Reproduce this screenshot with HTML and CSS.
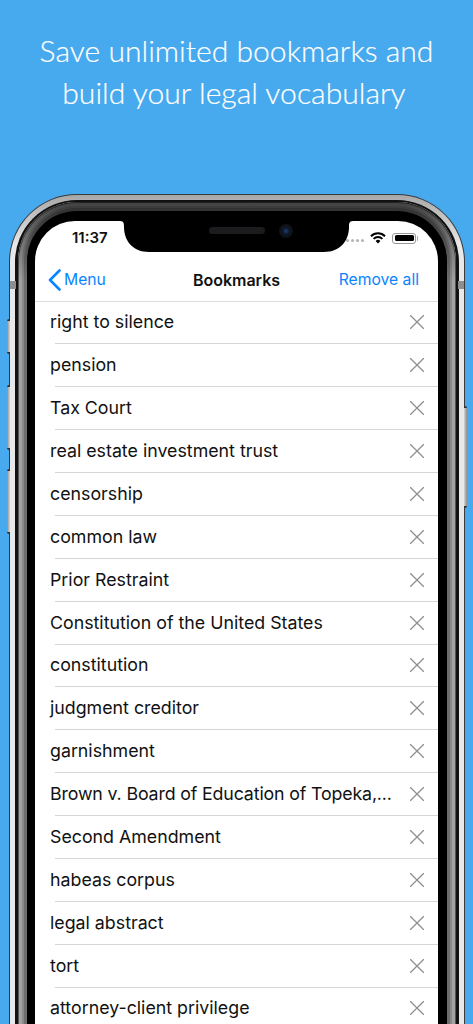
FILE: index.html
```html
<!DOCTYPE html>
<html lang="en">
<head>
<meta charset="utf-8">
<title>Bookmarks</title>
<link rel="stylesheet" href="styles.css">
</head>
<body>
<main class="page">
  <h1 class="headline">Save unlimited bookmarks and<br><span class="line-two">build your legal vocabulary</span></h1>
  <div class="phone">
    <span class="btn btn-mute"></span>
    <span class="btn btn-up"></span>
    <span class="btn btn-down"></span>
    <span class="btn btn-power"></span>
    <div class="bezel-light">
      <div class="bezel-black">
        <div class="bezel-grey">
          <div class="bezel-inner">
            <div class="screen">
              <svg class="notch" width="233" height="31" viewBox="0 0 233 31"><path d="M0 0H233C229 0 229 3 229 6C229 20 220 31 204 31H29C13 31 4 20 4 6C4 3 4 0 0 0Z" fill="#000"/></svg>
              <span class="speaker"></span>
              <span class="camera"></span>
              <div class="status">
                <span class="time">11:37</span>
                <div class="status-icons">
                  <span class="signal"><i></i><i></i><i></i><i></i></span>
                  <svg class="wifi" width="16" height="12" viewBox="0 0 16 12"><path d="M8 11.6 5.6 9a3.4 3.4 0 0 1 4.8 0Z" fill="#000"/><path d="M3.6 6.9a6.3 6.3 0 0 1 8.8 0M1 4.2a10 10 0 0 1 14 0" fill="none" stroke="#000" stroke-width="2"/></svg>
                  <span class="battery"><i></i></span>
                </div>
              </div>
              <nav class="nav">
                <a class="back"><svg width="13" height="22" viewBox="0 0 13 22"><path d="M11.5 1.5 2 11l9.500 9.500" fill="none" stroke="#0a84ff" stroke-width="2.600" stroke-linecap="round" stroke-linejoin="round"/></svg>Menu</a>
                <span class="title">Bookmarks</span>
                <a class="remove">Remove all</a>
              </nav>
              <ul class="list">
                <li class="row"><span class="term">right to silence</span><svg class="x" viewBox="0 0 14 14"><path d="M0 0 14 14M14 0 0 14"/></svg></li>
                <li class="row"><span class="term">pension</span><svg class="x" viewBox="0 0 14 14"><path d="M0 0 14 14M14 0 0 14"/></svg></li>
                <li class="row"><span class="term">Tax Court</span><svg class="x" viewBox="0 0 14 14"><path d="M0 0 14 14M14 0 0 14"/></svg></li>
                <li class="row"><span class="term">real estate investment trust</span><svg class="x" viewBox="0 0 14 14"><path d="M0 0 14 14M14 0 0 14"/></svg></li>
                <li class="row"><span class="term">censorship</span><svg class="x" viewBox="0 0 14 14"><path d="M0 0 14 14M14 0 0 14"/></svg></li>
                <li class="row"><span class="term">common law</span><svg class="x" viewBox="0 0 14 14"><path d="M0 0 14 14M14 0 0 14"/></svg></li>
                <li class="row"><span class="term">Prior Restraint</span><svg class="x" viewBox="0 0 14 14"><path d="M0 0 14 14M14 0 0 14"/></svg></li>
                <li class="row"><span class="term">Constitution of the United States</span><svg class="x" viewBox="0 0 14 14"><path d="M0 0 14 14M14 0 0 14"/></svg></li>
                <li class="row"><span class="term">constitution</span><svg class="x" viewBox="0 0 14 14"><path d="M0 0 14 14M14 0 0 14"/></svg></li>
                <li class="row"><span class="term">judgment creditor</span><svg class="x" viewBox="0 0 14 14"><path d="M0 0 14 14M14 0 0 14"/></svg></li>
                <li class="row"><span class="term">garnishment</span><svg class="x" viewBox="0 0 14 14"><path d="M0 0 14 14M14 0 0 14"/></svg></li>
                <li class="row"><span class="term term-tight">Brown v. Board of Education of Topeka,...</span><svg class="x" viewBox="0 0 14 14"><path d="M0 0 14 14M14 0 0 14"/></svg></li>
                <li class="row"><span class="term">Second Amendment</span><svg class="x" viewBox="0 0 14 14"><path d="M0 0 14 14M14 0 0 14"/></svg></li>
                <li class="row"><span class="term">habeas corpus</span><svg class="x" viewBox="0 0 14 14"><path d="M0 0 14 14M14 0 0 14"/></svg></li>
                <li class="row"><span class="term">legal abstract</span><svg class="x" viewBox="0 0 14 14"><path d="M0 0 14 14M14 0 0 14"/></svg></li>
                <li class="row"><span class="term">tort</span><svg class="x" viewBox="0 0 14 14"><path d="M0 0 14 14M14 0 0 14"/></svg></li>
                <li class="row"><span class="term">attorney-client privilege</span><svg class="x" viewBox="0 0 14 14"><path d="M0 0 14 14M14 0 0 14"/></svg></li>
              </ul>
            </div>
          </div>
        </div>
      </div>
    </div>
    <span class="band band-l"></span>
    <span class="band band-r"></span>
  </div>
</main>
</body>
</html>
```
FILE: styles.css
```css
* { box-sizing: border-box; }
html, body { margin: 0; padding: 0; }
body { width: 473px; height: 1024px; overflow: hidden; background: #47a9ee; font-family: Inter, "Liberation Sans", sans-serif; }
.page { height: 1024px; overflow: hidden; display: flex; flex-direction: column; align-items: center; }
.headline { flex: none; margin: 29px 0 0; height: 165px; font: 300 30.1px/42px Lato, sans-serif; color: #fff; text-align: center; -webkit-text-stroke: 0.2px #fff; }
.line-two { padding-right: 5px; }

.phone { position: relative; flex: none; width: 456px; height: 1000px; background: #3a3a3c; border-radius: 68px 68px 0 0; padding: 1px 1px 0; }
.bezel-light { height: 100%; padding: 5px 5px 0; background: linear-gradient(#a8a8a8, #e8e8e8 50px); border-radius: 67px 67px 0 0; }
.bezel-black { height: 100%; padding: 2px 3px 0; background: #111; border-radius: 62px 62px 0 0; }
.bezel-grey { position: relative; height: 100%; padding: 9px 9px 0; background: #6e6e6e; border-radius: 59px 59px 0 0; box-shadow: inset 0 0 0 1px #555, inset 0 0 0 4px #a2a2a2, inset 0 0 0 6px #8a8a8a; }
.bezel-grey::before { content: ""; position: absolute; left: 0; right: 0; top: 0; height: 80px; border-radius: 59px 59px 0 0; background: linear-gradient(rgba(0, 0, 0, 0.6), rgba(0, 0, 0, 0.5) 12px, rgba(0, 0, 0, 0)); }
.bezel-inner { position: relative; height: 100%; padding: 10px 8.5px 0; background: #000; border-radius: 50px 50px 0 0; }
.screen { position: relative; height: 100%; background: #fff; border-radius: 40px 40px 0 0; overflow: hidden; }

.band { position: absolute; top: 87px; width: 6px; height: 8px; background: #8e8e8e; }
.band-l { left: 1px; }
.band-r { right: 1px; }
.btn { position: absolute; width: 3px; background: linear-gradient(90deg, #8a8a8a, #d6d6d6); border-radius: 2px 0 0 2px; border-top: 2px solid #333; border-bottom: 2px solid #333; }
.btn-mute { left: -2px; top: 125px; height: 35px; }
.btn-up { left: -2px; top: 191px; height: 65px; }
.btn-down { left: -2px; top: 275px; height: 65px; }
.btn-power { right: -2px; top: 212px; height: 102px; border-radius: 0 2px 2px 0; background: linear-gradient(90deg, #d6d6d6, #8a8a8a); }

.notch { position: absolute; left: 85px; top: 0; }
.speaker { position: absolute; left: 174px; top: 6px; width: 56px; height: 7px; border-radius: 4px; background: #1c1c1e; }
.camera { position: absolute; left: 244px; top: 3px; width: 14px; height: 14px; border-radius: 50%; background: radial-gradient(circle, #1a3f7a 0, #0d1626 35%, #101012 70%); }

.status { height: 37px; display: flex; justify-content: space-between; padding: 7px 22px 0 37px; }
.time { font: 600 15px/20px Inter, sans-serif; color: #111; }
.status-icons { display: flex; align-items: center; height: 20px; }
.signal { display: flex; gap: 2px; margin: 5px 6px 0 0; }
.signal i { width: 3px; height: 3px; border-radius: 50%; background: #b4b4b4; }
.wifi { margin: 0 6px 0 0; }
.battery { position: relative; width: 24px; height: 11px; padding: 1.500px; border: 1px solid #999; border-radius: 3px; display: block; }
.battery::after { content: ""; position: absolute; right: -3px; top: 2px; width: 1.500px; height: 5px; border-radius: 0 1px 1px 0; background: #aaa; }
.battery i { display: block; height: 100%; background: #000; border-radius: 1.500px; }

.nav { height: 43.500px; display: flex; align-items: center; justify-content: space-between; padding: 2px 19px 0 13px; border-bottom: 1px solid #dcdcdc; position: relative; font: 400 15.700px/22px Inter, sans-serif; }
.back { display: flex; align-items: center; gap: 3px; color: #0a84ff; }
.title { position: absolute; left: 0; right: 0; text-align: center; font-size: 16px; font-weight: 600; color: #111; }
.remove { color: #0a84ff; }

.list { margin: 0; padding: 0; list-style: none; }
.row { height: 42.875px; display: flex; align-items: center; padding: 0 14px 1px 15px; position: relative; font: 400 17.800px/24px Inter, sans-serif; color: #111; }
.row::after { content: ""; position: absolute; left: 20px; right: 0; bottom: 0; height: 1px; background: #d6d6d6; }
.term { flex: none; white-space: nowrap; }
.term-tight { letter-spacing: -0.150px; }
.x { width: 14px; height: 14px; margin-left: auto; flex: none; }
.x path { fill: none; stroke: #8f8f8f; stroke-width: 1.300; }
```
